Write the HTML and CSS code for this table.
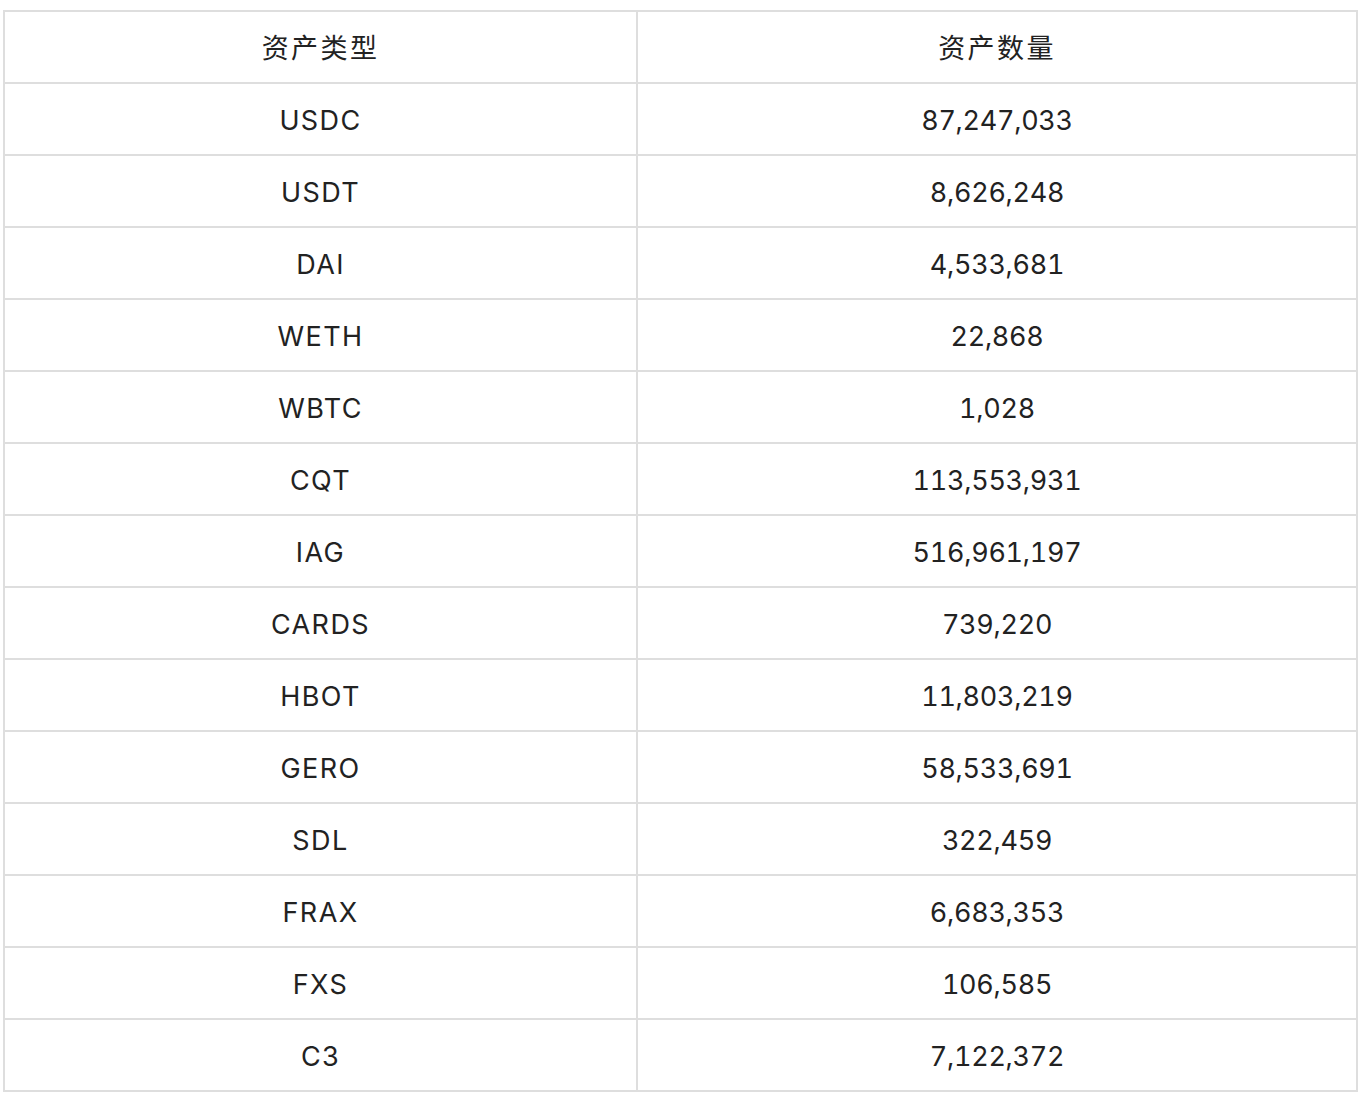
FILE: index.html
```html
<!DOCTYPE html>
<html lang="zh">
<head>
<meta charset="utf-8">
<link rel="stylesheet" href="styles.css">
</head>
<body>
<table class="assets">
  <colgroup><col class="col-type"><col class="col-amount"></colgroup>
  <thead>
    <tr><th>资产类型</th><th>资产数量</th></tr>
  </thead>
  <tbody>
    <tr><td>USDC</td><td class="num">87,247,033</td></tr>
    <tr><td>USDT</td><td class="num">8,626,248</td></tr>
    <tr><td>DAI</td><td class="num">4,533,681</td></tr>
    <tr><td>WETH</td><td class="num">22,868</td></tr>
    <tr><td>WBTC</td><td class="num">1,028</td></tr>
    <tr><td>CQT</td><td class="num">113,553,931</td></tr>
    <tr><td>IAG</td><td class="num">516,961,197</td></tr>
    <tr><td>CARDS</td><td class="num">739,220</td></tr>
    <tr><td>HBOT</td><td class="num">11,803,219</td></tr>
    <tr><td>GERO</td><td class="num">58,533,691</td></tr>
    <tr><td>SDL</td><td class="num">322,459</td></tr>
    <tr><td>FRAX</td><td class="num">6,683,353</td></tr>
    <tr><td>FXS</td><td class="num">106,585</td></tr>
    <tr><td>C3</td><td class="num">7,122,372</td></tr>
  </tbody>
</table>
</body>
</html>
```
FILE: styles.css
```css
html, body {
  margin: 0;
  padding: 0;
  background: #ffffff;
}
body {
  padding: 10px 8px 0 3px;
  font-family: Inter, "Noto Sans CJK SC", sans-serif;
  color: #222222;
}
.assets {
  width: 1355px;
  border-collapse: collapse;
  table-layout: fixed;
}
.col-type { width: 633px; }
.assets th,
.assets td {
  border: 2px solid #dedede;
  height: 68px;
  padding: 2px 0 0;
  text-align: center;
  vertical-align: middle;
  font-size: 27px;
  font-weight: 400;
  letter-spacing: 1.4px;
  line-height: 1;
}
.assets th {
  letter-spacing: 2.4px;
}
.assets .num {
  font-variant-numeric: tabular-nums;
  letter-spacing: -0.3px;
}
```
